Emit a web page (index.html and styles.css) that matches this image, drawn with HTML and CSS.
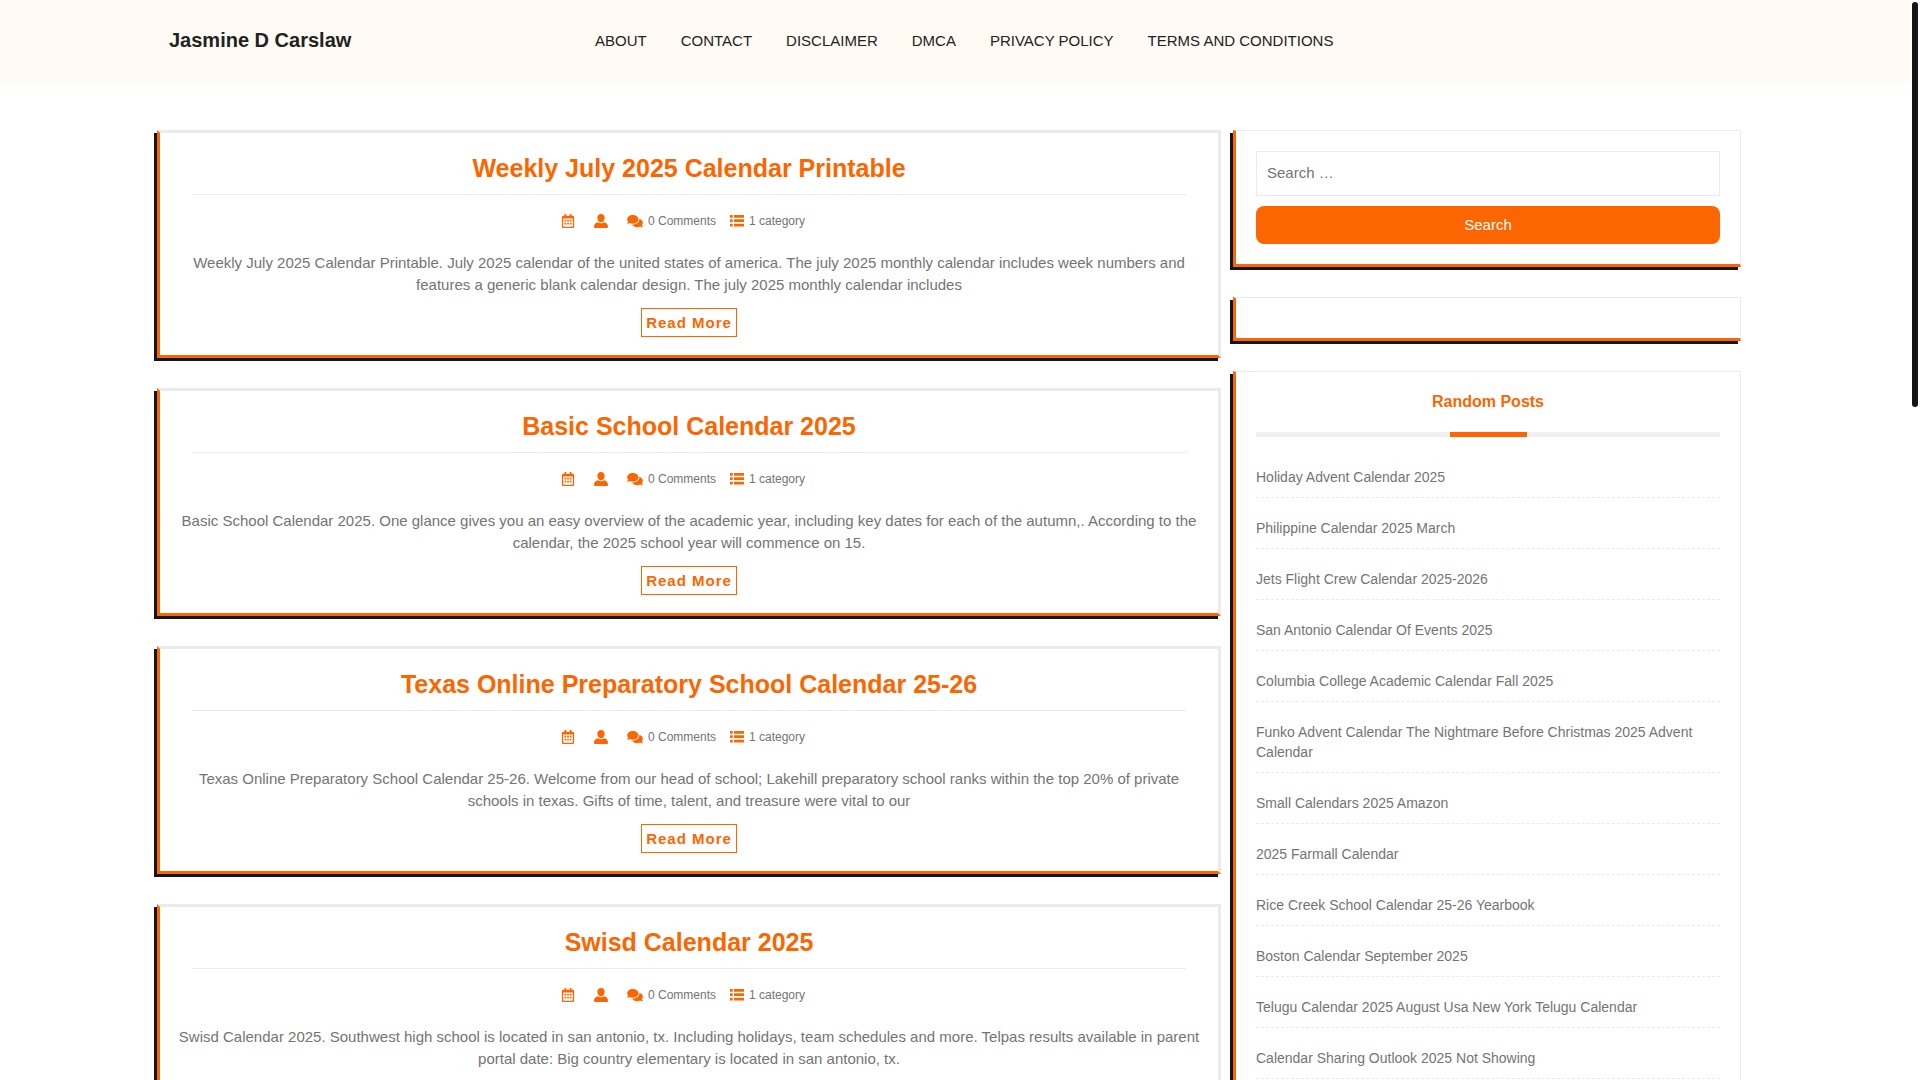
FILE: index.html
```html
<!DOCTYPE html>
<html lang="en">
<head>
    <meta charset="UTF-8">
    <meta name="viewport" content="width=device-width, initial-scale=1.0">
    <title>Jasmine D Carslaw</title>
    <link rel="stylesheet" href="styles.css">
</head>
<body>
    <svg class="icon-defs" aria-hidden="true">
        <symbol id="icon-calendar" viewBox="0 0 448 512">
            <path d="M400 64h-48V12c0-6.600-5.400-12-12-12h-40c-6.600 0-12 5.400-12 12v52H160V12c0-6.600-5.400-12-12-12h-40c-6.600 0-12 5.400-12 12v52H48C21.500 64 0 85.500 0 112v352c0 26.500 21.500 48 48 48h352c26.500 0 48-21.500 48-48V112c0-26.500-21.500-48-48-48zm-6 400H54c-3.300 0-6-2.700-6-6V160h352v298c0 3.300-2.700 6-6 6z"/>
            <path d="M96 208h64v64H96zM192 208h64v64h-64zM288 208h64v64h-64zM96 320h64v64H96zM192 320h64v64h-64zM288 320h64v64h-64z"/>
        </symbol>
        <symbol id="icon-user" viewBox="0 0 512 512">
            <path d="M256 0c74 0 134 62 134 142s-60 158-134 158-134-78-134-158S182 0 256 0zm110 300c85 14 146 73 146 153v11c0 27-21 48-48 48H48c-27 0-48-21-48-48v-11c0-80 61-139 146-153 30 25 67 40 110 40s80-15 110-40z"/>
        </symbol>
        <symbol id="icon-comments" viewBox="0 0 576 512">
            <path d="M416 192c0-88.400-93.100-160-208-160S0 103.600 0 192c0 34.300 14.100 65.900 38 92-13.400 30.200-35.500 54.200-35.800 54.500-2.200 2.300-2.800 5.700-1.500 8.700S4.800 352 8 352c36.600 0 66.900-12.300 88.700-25 32.200 15.700 70.300 25 111.300 25 114.900 0 208-71.600 208-160zm122 220c23.900-26 38-57.700 38-92 0-66.900-53.500-124.200-129.300-148.100.9 6.600 1.300 13.300 1.300 20.100 0 105.900-107.700 192-240 192-10.800 0-21.300-.8-31.700-1.900C207.800 439.600 281.800 480 368 480c41 0 79.100-9.200 111.300-25 21.800 12.700 52.100 25 88.700 25 3.200 0 6.100-1.900 7.300-4.800 1.300-2.900.7-6.300-1.500-8.700-.3-.3-22.400-24.200-35.800-54.500z"/>
        </symbol>
        <symbol id="icon-list" viewBox="0 0 512 512">
            <path d="M0 36h100v100H0zM0 196h100v100H0zM0 356h100v100H0zM146 36h366v100H146zM146 196h366v100H146zM146 356h366v100H146z"/>
        </symbol>
    </svg>

    <div class="page">
        <header class="header">
            <a class="logo" href="#">Jasmine D Carslaw</a>
            <nav class="menu">
                <a href="#">About</a>
                <a href="#">Contact</a>
                <a href="#">Disclaimer</a>
                <a href="#">DMCA</a>
                <a href="#">Privacy Policy</a>
                <a href="#">Terms and Conditions</a>
            </nav>
        </header>

        <div class="content">
            <main class="posts">
                <article class="post">
                    <h2><a href="#">Weekly July 2025 Calendar Printable</a></h2>
                    <div class="meta">
                        <span><svg class="icon"><use href="#icon-calendar"/></svg></span>
                        <span><svg class="icon"><use href="#icon-user"/></svg></span>
                        <span><svg class="icon icon-wide"><use href="#icon-comments"/></svg>0 Comments</span>
                        <span><svg class="icon"><use href="#icon-list"/></svg>1 category</span>
                    </div>
                    <p>Weekly July 2025 Calendar Printable. July 2025 calendar of the united states of america. The july 2025 monthly calendar includes week numbers and<br>features a generic blank calendar design. The july 2025 monthly calendar includes</p>
                    <a class="read-more" href="#">Read More</a>
                </article>

                <article class="post">
                    <h2><a href="#">Basic School Calendar 2025</a></h2>
                    <div class="meta">
                        <span><svg class="icon"><use href="#icon-calendar"/></svg></span>
                        <span><svg class="icon"><use href="#icon-user"/></svg></span>
                        <span><svg class="icon icon-wide"><use href="#icon-comments"/></svg>0 Comments</span>
                        <span><svg class="icon"><use href="#icon-list"/></svg>1 category</span>
                    </div>
                    <p>Basic School Calendar 2025. One glance gives you an easy overview of the academic year, including key dates for each of the autumn,. According to the<br>calendar, the 2025 school year will commence on 15.</p>
                    <a class="read-more" href="#">Read More</a>
                </article>

                <article class="post">
                    <h2><a href="#">Texas Online Preparatory School Calendar 25-26</a></h2>
                    <div class="meta">
                        <span><svg class="icon"><use href="#icon-calendar"/></svg></span>
                        <span><svg class="icon"><use href="#icon-user"/></svg></span>
                        <span><svg class="icon icon-wide"><use href="#icon-comments"/></svg>0 Comments</span>
                        <span><svg class="icon"><use href="#icon-list"/></svg>1 category</span>
                    </div>
                    <p>Texas Online Preparatory School Calendar 25-26. Welcome from our head of school; Lakehill preparatory school ranks within the top 20% of private<br>schools in texas. Gifts of time, talent, and treasure were vital to our</p>
                    <a class="read-more" href="#">Read More</a>
                </article>

                <article class="post">
                    <h2><a href="#">Swisd Calendar 2025</a></h2>
                    <div class="meta">
                        <span><svg class="icon"><use href="#icon-calendar"/></svg></span>
                        <span><svg class="icon"><use href="#icon-user"/></svg></span>
                        <span><svg class="icon icon-wide"><use href="#icon-comments"/></svg>0 Comments</span>
                        <span><svg class="icon"><use href="#icon-list"/></svg>1 category</span>
                    </div>
                    <p>Swisd Calendar 2025. Southwest high school is located in san antonio, tx. Including holidays, team schedules and more. Telpas results available in parent<br>portal date: Big country elementary is located in san antonio, tx.</p>
                    <a class="read-more" href="#">Read More</a>
                </article>
            </main>

            <aside class="sidebar">
                <section class="widget">
                    <form class="search">
                        <input type="search" placeholder="Search …" aria-label="Search for:">
                        <button type="submit">Search</button>
                    </form>
                </section>

                <section class="widget"></section>

                <section class="widget">
                    <h3>Random Posts</h3>
                    <ul>
                        <li><a href="#">Holiday Advent Calendar 2025</a></li>
                        <li><a href="#">Philippine Calendar 2025 March</a></li>
                        <li><a href="#">Jets Flight Crew Calendar 2025-2026</a></li>
                        <li><a href="#">San Antonio Calendar Of Events 2025</a></li>
                        <li><a href="#">Columbia College Academic Calendar Fall 2025</a></li>
                        <li><a href="#">Funko Advent Calendar The Nightmare Before Christmas 2025 Advent Calendar</a></li>
                        <li><a href="#">Small Calendars 2025 Amazon</a></li>
                        <li><a href="#">2025 Farmall Calendar</a></li>
                        <li><a href="#">Rice Creek School Calendar 25-26 Yearbook</a></li>
                        <li><a href="#">Boston Calendar September 2025</a></li>
                        <li><a href="#">Telugu Calendar 2025 August Usa New York Telugu Calendar</a></li>
                        <li><a href="#">Calendar Sharing Outlook 2025 Not Showing</a></li>
                    </ul>
                </section>
            </aside>
        </div>
    </div>

    <div class="scrollbar" aria-hidden="true">
        <div class="thumb"></div>
    </div>
</body>
</html>
```
FILE: styles.css
```css
* {
    box-sizing: border-box;
}

body {
    display: flex;
    height: 100vh;
    margin: 0;
    background: #fff;
    color: #747474;
    font-family: Arial, "Liberation Sans", sans-serif;
    font-size: 15px;
    line-height: 22px;
}

a {
    color: inherit;
    text-decoration: none;
}

.icon-defs {
    display: none;
}

/* the page scrolls inside its own box, next to a slim dark bar */
.page {
    flex: 1;
    min-width: 0;
    overflow-y: auto;
    scrollbar-width: none;
}

.scrollbar {
    width: 10px;
    padding: 2px;
}

.thumb {
    height: 37.5vh;
    border-radius: 3px;
    background: #151515;
}

.header {
    display: grid;
    grid-template-columns: 426fr 1146fr;
    align-items: center;
    padding: 24px 169px 27px;
    background: #fffaf4;
    color: #222;
}

.logo {
    font-size: 20px;
    font-weight: bold;
    line-height: 32px;
}

.menu {
    display: flex;
    gap: 34px;
    padding-top: 2px;
    text-transform: uppercase;
}

.content {
    display: grid;
    grid-template-columns: 1064fr 508fr;
    gap: 12px;
    padding: 47px 169px 30px 157px;
}

.posts,
.sidebar {
    display: flex;
    flex-direction: column;
    gap: 30px;
}

.post,
.widget {
    border: 3px solid #ebebeb;
    border-left-color: #fc6600;
    border-bottom-color: #fc6600;
    box-shadow: -3px 3px #151515;
}

.post {
    padding: 17px 32px 18px;
    text-align: center;
}

.post h2 {
    margin: 0;
    padding-bottom: 8px;
    border-bottom: 1px solid #ebebeb;
    color: #fc6600;
    font-size: 25px;
    line-height: 36px;
}

.meta {
    display: flex;
    justify-content: center;
    gap: 14px;
    padding: 15px 12px 0 0;
    font-size: 12px;
}

.meta span {
    display: flex;
    align-items: center;
}

.icon {
    width: 14px;
    height: 14px;
    margin-right: 5px;
    fill: #fc6600;
}

.icon-wide {
    width: 16px;
}

.post p {
    margin: 20px -16px 12px;
}

.read-more {
    display: inline-block;
    padding: 3px 4px 2px;
    border: 1px solid #fc6600;
    color: #fc6600;
    font-weight: bold;
    letter-spacing: 1px;
}

.widget {
    padding: 20px;
    border-top-width: 1px;
    border-right-width: 1px;
}

.search {
    display: flex;
    flex-direction: column;
    gap: 10px;
}

.search input {
    width: 100%;
    height: 45px;
    padding: 0 10px 2px;
    border: 1px solid #ebebeb;
    font: inherit;
}

.search input::placeholder {
    color: #747474;
}

.search button {
    height: 38px;
    border: 0;
    border-radius: 8px;
    background: #fc6600;
    color: #fff;
    font: inherit;
}

.widget h3 {
    margin: 0 0 30px;
    color: #fc6600;
    font-size: 16px;
    line-height: 20px;
    text-align: center;
}

.widget h3::after {
    content: "";
    display: block;
    height: 5px;
    margin-top: 20px;
    background: linear-gradient(#fc6600, #fc6600) center / 77px 5px no-repeat #f0f0f0;
}

.widget ul {
    margin: 0;
    padding: 0;
    list-style: none;
}

.widget li {
    margin-bottom: 20px;
    padding-bottom: 10px;
    border-bottom: 1px dashed #ebebeb;
    font-size: 14px;
    line-height: 20px;
}
```
